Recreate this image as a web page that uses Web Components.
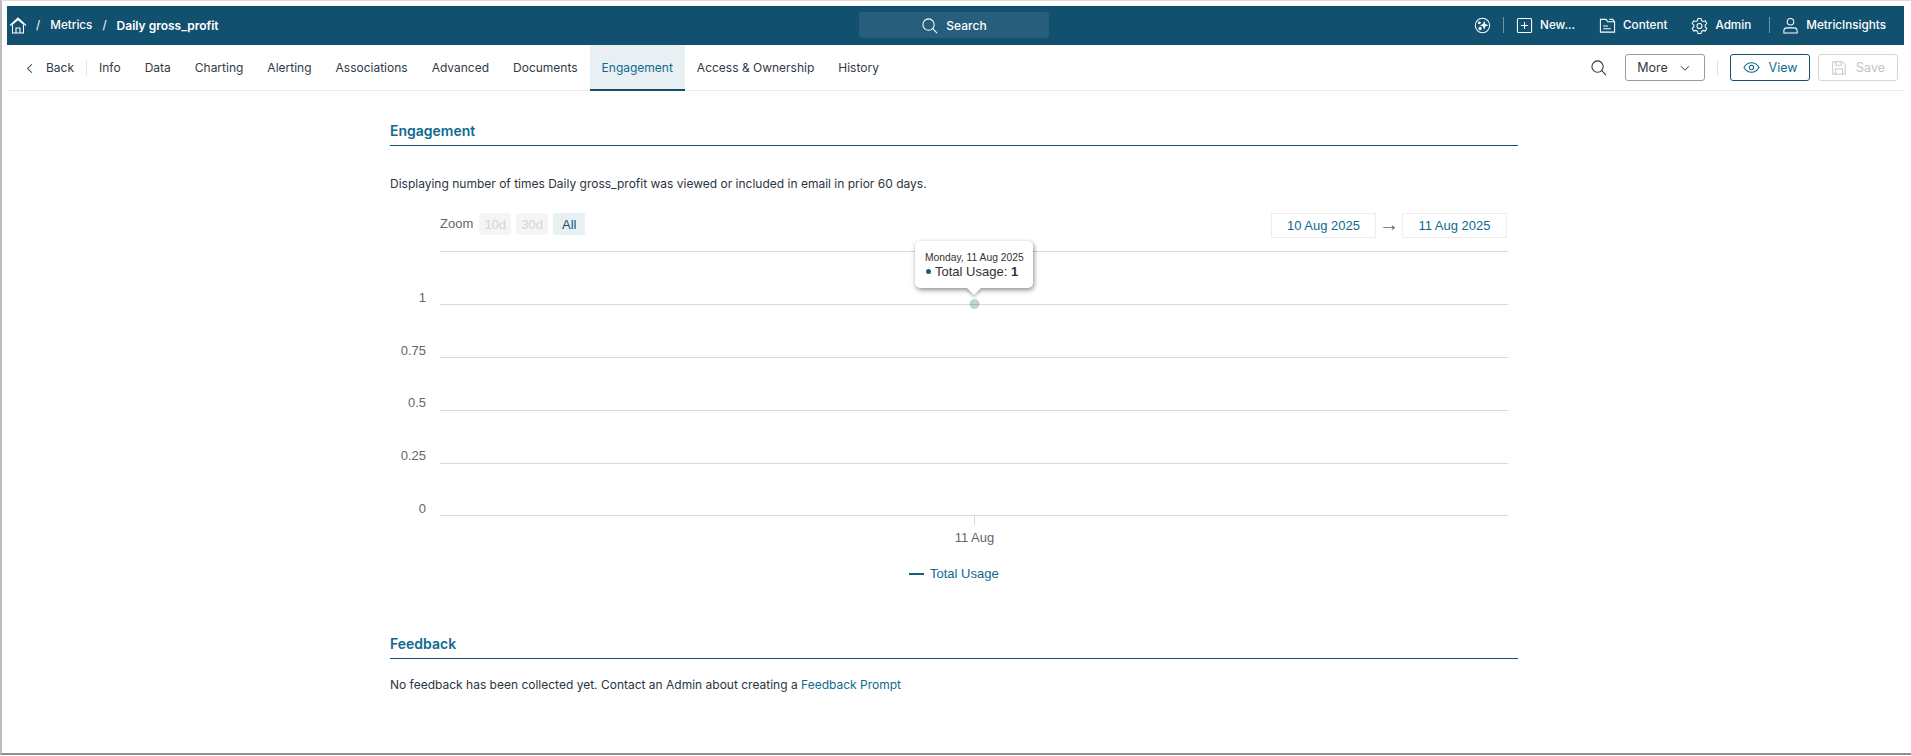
<!DOCTYPE html>
<html lang="en">
<head>
<meta charset="utf-8">
<title>Daily gross_profit - Engagement</title>
<style>
  html, body { margin: 0; padding: 0; background: #fff; height: 100%; overflow: hidden; }
  body { font-family: Inter, "Liberation Sans", sans-serif; font-size: 12px; color: #2b3440; }
  a { color: #0f6a8f; }
</style>
</head>
<body>
<app-frame>
  <top-bar>
    <bread-crumbs slot="left"></bread-crumbs>
    <search-box slot="center">Search</search-box>
    <top-link slot="right" icon="spark"></top-link>
    <v-sep slot="right"></v-sep>
    <top-link slot="right" icon="plus" class="after-sep">New...</top-link>
    <top-link slot="right" icon="folder">Content</top-link>
    <top-link slot="right" icon="gear">Admin</top-link>
    <v-sep slot="right" class="wide"></v-sep>
    <top-link slot="right" icon="user" class="after-sep">MetricInsights</top-link>
  </top-bar>
  <nav-bar>
    <back-link slot="left">Back</back-link>
    <nav-tab slot="left">Info</nav-tab>
    <nav-tab slot="left">Data</nav-tab>
    <nav-tab slot="left">Charting</nav-tab>
    <nav-tab slot="left">Alerting</nav-tab>
    <nav-tab slot="left">Associations</nav-tab>
    <nav-tab slot="left">Advanced</nav-tab>
    <nav-tab slot="left">Documents</nav-tab>
    <nav-tab slot="left" active>Engagement</nav-tab>
    <nav-tab slot="left">Access &amp; Ownership</nav-tab>
    <nav-tab slot="left">History</nav-tab>
    <action-bar slot="right"></action-bar>
  </nav-bar>
  <section-panel heading="Engagement">
    <p class="intro">Displaying number of times Daily gross_profit was viewed or included in email in prior 60 days.</p>
    <usage-chart></usage-chart>
  </section-panel>
  <section-panel heading="Feedback" class="feedback">
    <p class="note">No feedback has been collected yet. Contact an Admin about creating a <a>Feedback Prompt</a></p>
  </section-panel>
</app-frame>

<script>
const ICONS = {
  home: '<path d="M1 9.5 9 2l8 7.5M3 8.5 9 3.6l6 4.9M3.5 9v8h11V9M7 17v-5h4v5"/>',
  search: '<circle cx="8" cy="8" r="6"/><path d="m12.4 12.4 4.6 4.6"/>',
  spark: '<circle cx="9" cy="9" r="7.6"/><path d="M10.8 5.6l.8 2.3 2.2.8-2.2.8-.8 2.3-.8-2.3-2.2-.8 2.2-.8z" fill="currentColor"/><circle cx="5.6" cy="6.2" r="1" fill="currentColor"/><circle cx="6.4" cy="12.2" r="1.2" fill="currentColor"/>',
  plus: '<rect x="1.5" y="1.5" width="15" height="15" rx="1.5"/><path d="M9 5.2v7.6M5.2 9h7.6"/>',
  folder: '<path d="M1.5 16V2.5h6l1.8 2.5h7.2v11z"/><path d="M11 2.5h3.5l2 2.5M4.5 9.5h5M4.5 12.5h8"/>',
  gear: '<path d="M7.4 1.5h3.2l.5 2.3 1.7 1 2.3-.7 1.6 2.8-1.7 1.6v2l1.7 1.6-1.6 2.8-2.3-.7-1.7 1-.5 2.3H7.4l-.5-2.3-1.7-1-2.3.7-1.6-2.8L3 10.5v-2L1.3 6.9l1.6-2.8 2.3.7 1.7-1z"/><circle cx="9" cy="9.5" r="2.7"/>',
  user: '<circle cx="9" cy="5" r="3.5"/><path d="M2 17v-2.5c0-1.8 1.5-3 3.3-3h7.4c1.8 0 3.3 1.2 3.3 3V17z"/>',
  chevronLeft: '<path d="m11.5 4.5-4.5 4.5 4.5 4.5"/>',
  chevronDown: '<path d="m4.5 7 4.5 4.5L13.5 7"/>',
  eye: '<path d="M1 9c2-3.4 4.8-5 8-5s6 1.6 8 5c-2 3.4-4.8 5-8 5s-6-1.6-8-5z"/><circle cx="9" cy="9" r="2.3"/>',
  save: '<path d="M2 2h11l3 3v11H2z"/><path d="M5.5 2v4h6V2M5 16v-6h8v6"/>'
};

class UiIcon extends HTMLElement {
  connectedCallback() {
    const size = this.getAttribute('size') || 18;
    this.attachShadow({ mode: 'open' }).innerHTML = `
      <style>:host { display: inline-flex; flex: none; } svg { display: block; }</style>
      <svg width="${size}" height="${size}" viewBox="0 0 18 18" fill="none" stroke="currentColor" stroke-width="1.1">${ICONS[this.getAttribute('name')]}</svg>`;
  }
}

class AppFrame extends HTMLElement {
  constructor() {
    super();
    this.attachShadow({ mode: 'open' }).innerHTML = `
      <style>
        :host { display: block; box-sizing: border-box; height: 755px; padding: 5px 7px 0 5px;
                border-top: 1px solid #dcdcdc; border-left: 2px solid #bdbdbd; border-bottom: 2px solid #8f8f8f; }
      </style>
      <slot></slot>`;
  }
}

class TopBar extends HTMLElement {
  constructor() {
    super();
    this.attachShadow({ mode: 'open' }).innerHTML = `
      <style>
        :host { display: grid; grid-template-columns: 1fr auto 1fr; align-items: center; box-sizing: border-box; height: 39px;
                padding-bottom: 1px; background: #11506f; color: #fff; font-weight: 500; font-size: 11.7px; }
        .left { display: flex; align-items: center; }
        .center { display: flex; margin-right: 3px; }
        .right { display: flex; align-items: center; justify-content: flex-end; padding-right: 18px; }
      </style>
      <div class="left"><slot name="left"></slot></div>
      <div class="center"><slot name="center"></slot></div>
      <div class="right"><slot name="right"></slot></div>`;
  }
}

class BreadCrumbs extends HTMLElement {
  constructor() {
    super();
    this.attachShadow({ mode: 'open' }).innerHTML = `
      <style>
        :host { display: flex; align-items: center; padding-left: 2px; }
        .sep { margin: 0 10px; font-weight: 400; }
        .sep.first { margin-left: 9px; }
        b { font-weight: 600; font-size: 12px; }
      </style>
      <ui-icon name="home"></ui-icon>
      <span class="sep first">/</span><span>Metrics</span>
      <span class="sep">/</span><b>Daily gross_profit</b>`;
  }
}

class SearchBox extends HTMLElement {
  constructor() {
    super();
    this.attachShadow({ mode: 'open' }).innerHTML = `
      <style>
        :host { display: flex; align-items: center; justify-content: center; gap: 8px; box-sizing: border-box;
                width: 190px; height: 26px; border-radius: 3px; background: #265e7b; font-size: 12px; font-weight: 500; }
      </style>
      <ui-icon name="search" size="17"></ui-icon><slot></slot>`;
  }
}

class TopLink extends HTMLElement {
  constructor() {
    super();
    this.attachShadow({ mode: 'open' }).innerHTML = `
      <style>
        :host { display: inline-flex; align-items: center; gap: 7px; margin-left: 24px; white-space: nowrap; }
        :host(.after-sep) { margin-left: 12px; }
      </style>
      <ui-icon name="${this.getAttribute('icon')}" size="17"></ui-icon><slot></slot>`;
  }
}

class VSep extends HTMLElement {
  constructor() {
    super();
    this.attachShadow({ mode: 'open' }).innerHTML = `
      <style>
        :host { display: block; width: 1px; height: 16px; margin-left: 12px; background: #6f93a6; }
        :host(.wide) { margin-left: 18px; }
      </style>`;
  }
}

class NavBar extends HTMLElement {
  constructor() {
    super();
    this.attachShadow({ mode: 'open' }).innerHTML = `
      <style>
        :host { display: flex; justify-content: space-between; height: 46px; box-sizing: border-box;
                border-bottom: 1px solid #ececec; font-size: 12px; color: #323a46; }
        .left, .right { display: flex; align-items: stretch; }
        .left { padding-left: 14px; }
      </style>
      <div class="left"><slot name="left"></slot></div>
      <div class="right"><slot name="right"></slot></div>`;
  }
}

class BackLink extends HTMLElement {
  constructor() {
    super();
    this.attachShadow({ mode: 'open' }).innerHTML = `
      <style>
        :host { display: flex; align-items: center; gap: 8px; padding-top: 1px; }
        .t { padding-right: 12px; border-right: 1px solid #e4e4e4; line-height: 16px; }
      </style>
      <ui-icon name="chevronLeft" size="17"></ui-icon><span class="t"><slot></slot></span>`;
  }
}

class NavTab extends HTMLElement {
  constructor() {
    super();
    this.attachShadow({ mode: 'open' }).innerHTML = `
      <style>
        :host { display: flex; align-items: center; box-sizing: border-box; padding: 0 12px 2px; margin-bottom: -1px; white-space: nowrap; }
        :host([active]) { background: #e9f0f4; color: #0f6a8f; border-bottom: 2px solid #11506f; padding-bottom: 0; }
      </style>
      <slot></slot>`;
  }
}

class ActionButton extends HTMLElement {
  constructor() {
    super();
    this.attachShadow({ mode: 'open' }).innerHTML = `
      <style>
        :host { display: inline-flex; align-items: center; justify-content: center; gap: 9px; box-sizing: border-box;
                width: 80px; height: 27px; border: 1px solid #9a9a9a; border-radius: 3px; color: #323a46; font-size: 12.5px; }
        :host([kind=primary]) { border-color: #11506f; color: #0f6a8f; }
        :host([kind=disabled]) { border-color: #d5d5d5; color: #c4c4c4; }
      </style>
      <slot></slot>`;
  }
}

class ActionBar extends HTMLElement {
  constructor() {
    super();
    this.attachShadow({ mode: 'open' }).innerHTML = `
      <style>
        :host { display: flex; align-items: center; padding-right: 6px; }
        .find { margin-right: 18px; color: #333; }
        .sep { width: 1px; height: 16px; margin: 0 12px; background: #e4e4e4; }
        .save { margin-left: 8px; }
      </style>
      <ui-icon class="find" name="search" size="17"></ui-icon>
      <action-button>More <ui-icon name="chevronDown" size="16"></ui-icon></action-button>
      <div class="sep"></div>
      <action-button kind="primary"><ui-icon name="eye" size="17"></ui-icon>View</action-button>
      <action-button class="save" kind="disabled"><ui-icon name="save" size="16"></ui-icon>Save</action-button>`;
  }
}

class SectionPanel extends HTMLElement {
  constructor() {
    super();
    this.attachShadow({ mode: 'open' }).innerHTML = `
      <style>
        :host { display: block; width: 1128px; margin-left: 383px; padding-top: 31px; }
        :host(.feedback) { padding-top: 45px; }
        h2 { margin: 0; height: 23px; line-height: 18px; font-size: 14px; font-weight: 600;
             color: #0f6a8f; border-bottom: 1px solid #11506f; }
        ::slotted(p) { margin: 0; font-size: 12px; line-height: 18px; color: #2b3440; }
        ::slotted(.intro) { margin-top: 29px; }
        ::slotted(.note) { margin-top: 17px; }
      </style>
      <h2>${this.getAttribute('heading')}</h2>
      <slot></slot>`;
  }
}

class DateBox extends HTMLElement {
  constructor() {
    super();
    this.attachShadow({ mode: 'open' }).innerHTML = `
      <style>
        :host { display: flex; align-items: center; justify-content: center; box-sizing: border-box;
                width: 105px; height: 25px; border: 1px solid #ededed; color: #0f6a8f; font-size: 13px; }
      </style>
      <slot></slot>`;
  }
}

class ChartTooltip extends HTMLElement {
  constructor() {
    super();
    this.attachShadow({ mode: 'open' }).innerHTML = `
      <style>
        :host { position: absolute; left: 525px; top: 1px; box-sizing: border-box; width: 118px; height: 47px;
                padding: 11px 10px 0; background: #fff; border-radius: 5px; box-shadow: 1px 2px 5px rgba(0,0,0,.45);
                font-family: "Liberation Sans", Arial, sans-serif; color: #333; white-space: nowrap; }
        :host::after { content: ""; position: absolute; left: 54px; bottom: -5px; width: 10px; height: 10px;
                       background: #fff; transform: rotate(45deg); box-shadow: 2px 2px 3px rgba(0,0,0,.2); }
        .date { font-size: 10.3px; line-height: 12px; }
        .row { display: flex; align-items: center; gap: 4px; padding-left: 1px; font-size: 13px; line-height: 15px; }
        .dot { width: 5px; height: 5px; border-radius: 50%; background: #11607f; }
        b { font-weight: 700; }
      </style>
      <div class="date">Monday, 11 Aug 2025</div>
      <div class="row"><span class="dot"></span><span>Total Usage: <b>1</b></span></div>`;
  }
}

class UsageChart extends HTMLElement {
  constructor() {
    super();
    const labels = [['1', 57], ['0.75', 110], ['0.5', 162], ['0.25', 215], ['0', 268]];
    const lines = [11, 64, 117, 170, 223, 275];
    this.attachShadow({ mode: 'open' }).innerHTML = `
      <style>
        :host { display: block; margin-top: 20px; font-family: "Liberation Sans", Arial, sans-serif; }
        .tools { display: flex; align-items: flex-start; height: 25px; padding: 0 11px 0 50px; font-size: 13px; color: #666; }
        .zoom { margin-right: 6px; line-height: 22px; }
        .rng { display: flex; align-items: center; justify-content: center; width: 32px; height: 22px; margin-right: 5px;
               border-radius: 2px; background: #f5f5f5; color: #d4d4d4; }
        .rng.on { background: #e9f0f4; color: #11506f; }
        .dates { display: flex; align-items: center; margin-left: auto; height: 25px; }
        .arrow { width: 26px; margin-top: -3px; text-align: center; color: #666; font-size: 20px; line-height: 1; }
        .plot { position: relative; height: 350px; margin-top: 2px; }
        svg { display: block; }
        text { font-size: 13px; fill: #666; }
      </style>
      <div class="tools">
        <span class="zoom">Zoom</span>
        <span class="rng">10d</span><span class="rng">30d</span><span class="rng on">All</span>
        <div class="dates"><date-box>10 Aug 2025</date-box><span class="arrow">→</span><date-box>11 Aug 2025</date-box></div>
      </div>
      <div class="plot">
        <svg width="1128" height="350">
          ${lines.map(y => `<rect x="50" y="${y}" width="1068" height="1" fill="#d9d9d9"/>`).join('')}
          <rect x="584" y="276" width="1" height="9" fill="#d9d9d9"/>
          ${labels.map(([t, y]) => `<text x="36" y="${y + 5}" text-anchor="end">${t}</text>`).join('')}
          <text x="584.5" y="302" text-anchor="middle">11 Aug</text>
          <circle cx="584.5" cy="64" r="5" fill="#11607f" fill-opacity=".28"/>
          <rect x="519" y="333" width="15" height="2" fill="#11607f"/>
          <text x="540" y="338" style="fill:#0f6a8f">Total Usage</text>
        </svg>
        <chart-tooltip></chart-tooltip>
      </div>`;
  }
}

customElements.define('ui-icon', UiIcon);
customElements.define('app-frame', AppFrame);
customElements.define('top-bar', TopBar);
customElements.define('bread-crumbs', BreadCrumbs);
customElements.define('search-box', SearchBox);
customElements.define('top-link', TopLink);
customElements.define('v-sep', VSep);
customElements.define('nav-bar', NavBar);
customElements.define('back-link', BackLink);
customElements.define('nav-tab', NavTab);
customElements.define('action-button', ActionButton);
customElements.define('action-bar', ActionBar);
customElements.define('section-panel', SectionPanel);
customElements.define('date-box', DateBox);
customElements.define('chart-tooltip', ChartTooltip);
customElements.define('usage-chart', UsageChart);
</script>
</body>
</html>
